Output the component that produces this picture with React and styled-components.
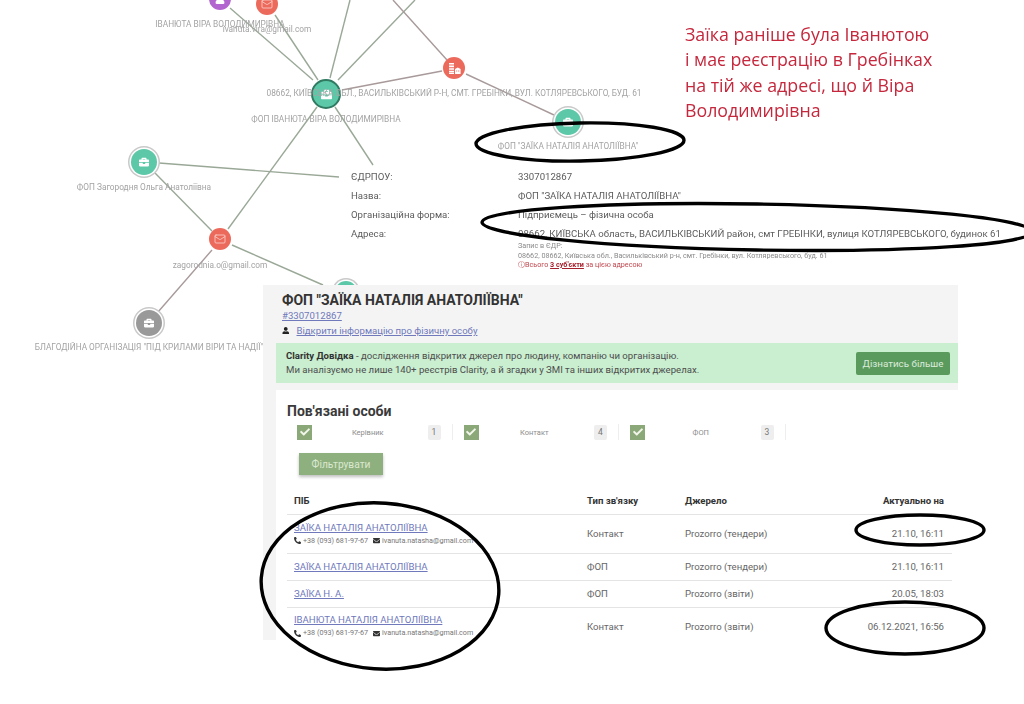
import React from "react";
import styled, { createGlobalStyle } from "styled-components";
import {
  FaBriefcase,
  FaCheck,
  FaEnvelope,
  FaPhoneAlt,
  FaUser,
} from "react-icons/fa";
import { Mail } from "lucide-react";

const GlobalStyle = createGlobalStyle`
  html, body {
    margin: 0;
    background: #fff;
  }
  body {
    font-family: Roboto, "Liberation Sans", sans-serif;
    color: #555;
  }
`;

const Page = styled.div`
  position: relative;
  width: 1024px;
  height: 704px;
  padding: 285px 66px 0 263px;
  box-sizing: border-box;
  overflow: hidden;
  filter: blur(0.4px);
`;

const GraphLines = styled.svg`
  position: absolute;
  inset: 0;
  line {
    stroke: #9aa897;
    stroke-width: 1.4;
  }
  line.pink {
    stroke: #a89a9a;
  }
`;

const Node = styled.div`
  position: absolute;
  left: ${(p) => p.$x}px;
  top: ${(p) => p.$y}px;
  width: ${(p) => p.$size}px;
  height: ${(p) => p.$size}px;
  margin: ${(p) => -p.$size / 2}px 0 0 ${(p) => -p.$size / 2}px;
  border-radius: 50%;
  background: ${(p) => p.$color};
  color: #fff;
  display: flex;
  align-items: center;
  justify-content: center;
  font-size: ${(p) => p.$icon}px;
  box-sizing: border-box;
  border: ${(p) => (p.$main ? "2px solid #2f7a60" : "none")};
  box-shadow: ${(p) =>
    p.$ring ? "0 0 0 1.5px #fff, 0 0 0 3px #c9c9c9" : "none"};
`;

const NodeLabel = styled.span`
  position: absolute;
  left: ${(p) => p.$x}px;
  top: ${(p) => p.$y}px;
  transform: translate(-50%, -50%);
  font-size: 8.3px;
  color: #a3a3a3;
  white-space: nowrap;
`;

const Note = styled.p`
  position: absolute;
  left: 685px;
  top: 22px;
  margin: 0;
  font-family: "Open Sans", sans-serif;
  font-size: 17.8px;
  line-height: 25.4px;
  color: #c5283d;
  white-space: pre-line;
`;

const Info = styled.div`
  position: absolute;
  left: 351px;
  top: 167px;
  display: grid;
  grid-template-columns: 167px auto;
  grid-auto-rows: 19px;
  align-items: center;
  font-size: 9.65px;
  color: #5c5c5c;
  white-space: nowrap;
`;

const Registry = styled.div`
  grid-column: 2;
  align-self: start;
  margin-top: -2px;
  font-size: 7.2px;
  line-height: 9.5px;
  color: #8a8a8a;
`;

const Warning = styled.div`
  color: #c0484f;
  b {
    color: #a5202c;
    text-decoration: underline;
  }
`;

const Panel = styled.section`
  position: relative;
  height: 355px;
  padding: 8px 0 0 13px;
  box-sizing: border-box;
  background: #f4f4f4;
`;

const Title = styled.h1`
  margin: 0 0 0 6px;
  font-size: 14px;
  line-height: 15px;
  font-weight: 700;
  color: #333;
`;

const Link = styled.a`
  color: #6f79bb;
  text-decoration: underline;
  font-size: 9.6px;
`;

const IdLine = styled.div`
  margin-left: 6px;
  line-height: 12px;
`;

const PersonLine = styled.div`
  margin: 2px 0 0 6px;
  display: flex;
  align-items: center;
  gap: 7px;
  line-height: 13px;
  color: #222;
  font-size: 7.5px;
`;

const Banner = styled.div`
  margin-top: 6px;
  height: 40px;
  padding: 0 8px 0 10px;
  display: flex;
  align-items: center;
  justify-content: space-between;
  background: #c9eed0;
  font-size: 9.6px;
  line-height: 14px;
  color: #4d4d4d;
  b {
    color: #333;
  }
`;

const BannerButton = styled.button`
  width: 94px;
  height: 23px;
  padding: 0;
  border: 0;
  border-radius: 2px;
  background: #5b9a5d;
  color: #dcecdc;
  font: 9.8px Roboto, sans-serif;
`;

const Card = styled.div`
  margin-top: 7px;
  height: 251px;
  padding: 12px 6px 0 11px;
  box-sizing: border-box;
  background: #fff;
`;

const CardTitle = styled.h2`
  margin: 0;
  font-size: 14px;
  line-height: 18px;
  font-weight: 700;
  color: #3a3a3a;
`;

const Filters = styled.div`
  margin: 4px 0 0 10px;
  display: flex;
`;

const Filter = styled.div`
  width: 166.5px;
  height: 16px;
  padding-right: 11px;
  display: flex;
  align-items: center;
  box-sizing: border-box;
`;

const Check = styled.span`
  width: 15px;
  height: 15px;
  display: flex;
  align-items: center;
  justify-content: center;
  background: #8aa878;
  color: #f2f6ea;
  font-size: 10px;
`;

const FilterName = styled.span`
  flex: 1;
  padding-right: 4px;
  text-align: center;
  font-size: 7.5px;
  color: #8c8c8c;
`;

const Count = styled.span`
  width: 13px;
  height: 15px;
  display: flex;
  align-items: center;
  justify-content: center;
  background: #eee;
  border-radius: 2px;
  font-size: 8.5px;
  color: #777;
`;

const Divider = styled.span`
  width: 1px;
  height: 16px;
  margin-left: 11px;
  background: #eee;
  flex: none;
`;

const FilterButton = styled.button`
  display: block;
  width: 84px;
  height: 22px;
  margin: 13px 0 0 12px;
  padding: 0;
  border: 0;
  background: #8eb07f;
  color: #dbe8d0;
  font: 10.2px Roboto, sans-serif;
  box-shadow: 0 2px 3px rgba(0, 0, 0, 0.25);
`;

const Table = styled.table`
  width: 665px;
  margin-top: 19px;
  border-collapse: collapse;
  table-layout: fixed;
  font-size: 9.6px;
  color: #666;
`;

const Head = styled.th`
  height: 20px;
  padding: 0 ${(p) => (p.$right ? 8 : 0)}px 6px 7px;
  box-sizing: border-box;
  border-bottom: 1px solid #e4e4e4;
  font-size: 9.6px;
  font-weight: 700;
  color: #333;
  text-align: ${(p) => (p.$right ? "right" : "left")};
`;

const Cell = styled.td`
  padding: 0 ${(p) => (p.$right ? 8 : 0)}px 0 7px;
  text-align: ${(p) => (p.$right ? "right" : "left")};
  white-space: nowrap;
`;

const Row = styled.tr`
  height: ${(p) => p.$height}px;
  &:not(:last-child) td {
    border-bottom: 1px solid #e4e4e4;
  }
`;

const Contacts = styled.div`
  margin-top: 3px;
  display: flex;
  align-items: center;
  gap: 2px;
  font-size: 7.2px;
  line-height: 10px;
  color: #777;
  svg {
    color: #333;
    font-size: 7px;
  }
  span {
    margin-right: 3px;
  }
`;

const Marks = styled.svg`
  position: absolute;
  inset: 0;
  ellipse {
    fill: none;
    stroke: #000;
    stroke-width: 3.4;
  }
`;

const links = [
  [230, 8, 313, 80],
  [275, 15, 318, 80],
  [350, 0, 330, 78],
  [415, 0, 338, 80],
  [393, 0, 447, 60, "pink"],
  [342, 90, 442, 71, "pink"],
  [466, 74, 554, 115, "pink"],
  [335, 107, 373, 165],
  [317, 107, 228, 229],
  [159, 163, 339, 177],
  [155, 173, 212, 231],
  [212, 250, 158, 312, "pink"],
  [232, 245, 323, 285],
];

const Building = () => (
  <svg width="13" height="13" viewBox="0 0 13 13" fill="#fff">
    <path d="M1 1h5v1.6H1zM1 3.6h5v1.6H1zM1 6.2h5v1.6H1zM1 8.8h5v1.6H1zM1 11h5v1H1z" />
    <path d="M7 7l2.8-1.6L12.6 7v5H7zm1.2 1.4v1.2h1V8.4zm2 0v1.2h1V8.4z" />
  </svg>
);

const Envelope = () => <Mail size={12} strokeWidth={1.4} color="#fde3dc" />;

const nodes = [
  { x: 220, y: -1, size: 22, color: "#b264cf", icon: 10, glyph: <FaUser /> },
  { x: 267, y: 4, size: 22, color: "#ec6a5c", glyph: <Envelope /> },
  { x: 326, y: 94, size: 30, color: "#5cc8a8", icon: 11, main: true, glyph: <FaBriefcase /> },
  { x: 454, y: 68, size: 22, color: "#ec6a5c", glyph: <Building /> },
  { x: 144, y: 162, size: 26, color: "#5cc8a8", icon: 10, ring: true, glyph: <FaBriefcase /> },
  { x: 220, y: 239, size: 22, color: "#ec6a5c", glyph: <Envelope /> },
  { x: 149, y: 323, size: 26, color: "#999", icon: 10, ring: true, glyph: <FaBriefcase /> },
  { x: 346, y: 292, size: 22, color: "#5cc8a8", icon: 9, ring: true, glyph: <FaBriefcase /> },
  { x: 568, y: 122, size: 26, color: "#5cc8a8", icon: 10, ring: true, glyph: <FaBriefcase /> },
];

const labels = [
  [220, 24, "ІВАНЮТА ВІРА ВОЛОДИМИРІВНА"],
  [267, 29, "ivanuta.vira@gmail.com"],
  [454, 93, "08662, КИЇВСЬКА ОБЛ., ВАСИЛЬКІВСЬКИЙ Р-Н, СМТ. ГРЕБІНКИ, ВУЛ. КОТЛЯРЕВСЬКОГО, БУД. 61"],
  [326, 118.5, "ФОП ІВАНЮТА ВІРА ВОЛОДИМИРІВНА"],
  [144, 187, "ФОП Загородня Ольга Анатоліївна"],
  [220, 265, "zagorodnia.o@gmail.com"],
  [149, 347, "БЛАГОДІЙНА ОРГАНІЗАЦІЯ \"ПІД КРИЛАМИ ВІРИ ТА НАДІЇ\""],
  [568, 146, "ФОП \"ЗАЇКА НАТАЛІЯ АНАТОЛІЇВНА\""],
];

const filters = [
  ["Керівник", 1],
  ["Контакт", 4],
  ["ФОП", 3],
];

const people = [
  { name: "ЗАЇКА НАТАЛІЯ АНАТОЛІЇВНА", type: "Контакт", source: "Prozorro (тендери)", date: "21.10, 16:11", height: 39, contacts: true },
  { name: "ЗАЇКА НАТАЛІЯ АНАТОЛІЇВНА", type: "ФОП", source: "Prozorro (тендери)", date: "21.10, 16:11", height: 27 },
  { name: "ЗАЇКА Н. А.", type: "ФОП", source: "Prozorro (звіти)", date: "20.05, 18:03", height: 27 },
  { name: "ІВАНЮТА НАТАЛІЯ АНАТОЛІЇВНА", type: "Контакт", source: "Prozorro (звіти)", date: "06.12.2021, 16:56", height: 38, contacts: true },
];

const App = () => {
  return (
    <Page>
      <GlobalStyle />
      <GraphLines width="1024" height="704">
        {links.map(([x1, y1, x2, y2, tone], i) => (
          <line key={i} x1={x1} y1={y1} x2={x2} y2={y2} className={tone} />
        ))}
      </GraphLines>
      {nodes.map((n, i) => (
        <Node key={i} $x={n.x} $y={n.y} $size={n.size} $color={n.color} $icon={n.icon} $ring={n.ring} $main={n.main}>
          {n.glyph}
        </Node>
      ))}
      {labels.map(([x, y, text]) => (
        <NodeLabel key={text} $x={x} $y={y}>
          {text}
        </NodeLabel>
      ))}

      <Note>
        {"Заїка раніше була Іванютою\nі має реєстрацію в Гребінках\nна тій же адресі, що й Віра\nВолодимирівна"}
      </Note>

      <Info>
        <span>ЄДРПОУ:</span>
        <span>3307012867</span>
        <span>Назва:</span>
        <span>ФОП "ЗАЇКА НАТАЛІЯ АНАТОЛІЇВНА"</span>
        <span>Організаційна форма:</span>
        <span>Підприємець – фізична особа</span>
        <span>Адреса:</span>
        <span>08662, КИЇВСЬКА область, ВАСИЛЬКІВСЬКИЙ район, смт ГРЕБІНКИ, вулиця КОТЛЯРЕВСЬКОГО, будинок 61</span>
        <Registry>
          Запис в ЄДР:
          <br />
          08662, 08662, Київська обл., Васильківський р-н, смт. Гребінки, вул. Котляревського, буд. 61
          <Warning>
            ⓘВсього <b>3 суб'єкти</b> за цією адресою
          </Warning>
        </Registry>
      </Info>

      <Panel>
        <Title>ФОП "ЗАЇКА НАТАЛІЯ АНАТОЛІЇВНА"</Title>
        <IdLine>
          <Link href="#">#3307012867</Link>
        </IdLine>
        <PersonLine>
          <FaUser />
          <Link href="#">Відкрити інформацію про фізичну особу</Link>
        </PersonLine>
        <Banner>
          <div>
            <b>Clarity Довідка</b> - дослідження відкритих джерел про людину, компанію чи організацію.
            <br />
            Ми аналізуємо не лише 140+ реєстрів Clarity, а й згадки у ЗМІ та інших відкритих джерелах.
          </div>
          <BannerButton>Дізнатись більше</BannerButton>
        </Banner>
        <Card>
          <CardTitle>Пов'язані особи</CardTitle>
          <Filters>
            {filters.map(([name, count]) => (
              <Filter key={name}>
                <Check>
                  <FaCheck />
                </Check>
                <FilterName>{name}</FilterName>
                <Count>{count}</Count>
                <Divider />
              </Filter>
            ))}
          </Filters>
          <FilterButton>Фільтрувати</FilterButton>
          <Table>
            <colgroup>
              <col width="293" />
              <col width="98" />
              <col width="137" />
              <col width="137" />
            </colgroup>
            <thead>
              <tr>
                <Head>ПІБ</Head>
                <Head>Тип зв'язку</Head>
                <Head>Джерело</Head>
                <Head $right>Актуально на</Head>
              </tr>
            </thead>
            <tbody>
              {people.map((p, i) => (
                <Row key={i} $height={p.height}>
                  <Cell>
                    <Link href="#">{p.name}</Link>
                    {p.contacts && (
                      <Contacts>
                        <FaPhoneAlt />
                        <span>+38 (093) 681-97-67</span>
                        <FaEnvelope />
                        ivanuta.natasha@gmail.com
                      </Contacts>
                    )}
                  </Cell>
                  <Cell>{p.type}</Cell>
                  <Cell>{p.source}</Cell>
                  <Cell $right>{p.date}</Cell>
                </Row>
              ))}
            </tbody>
          </Table>
        </Card>
      </Panel>

      <Marks width="1024" height="704">
        <ellipse cx="580" cy="142" rx="104" ry="19" transform="rotate(-1 580 142)" />
        <ellipse cx="757" cy="227" rx="275" ry="23" transform="rotate(1 757 227)" />
        <ellipse cx="380" cy="586" rx="119" ry="83" transform="rotate(4 380 586)" />
        <ellipse cx="920" cy="530" rx="64" ry="15" />
        <ellipse cx="905" cy="628" rx="79" ry="26" />
      </Marks>
    </Page>
  );
};

export default App;
